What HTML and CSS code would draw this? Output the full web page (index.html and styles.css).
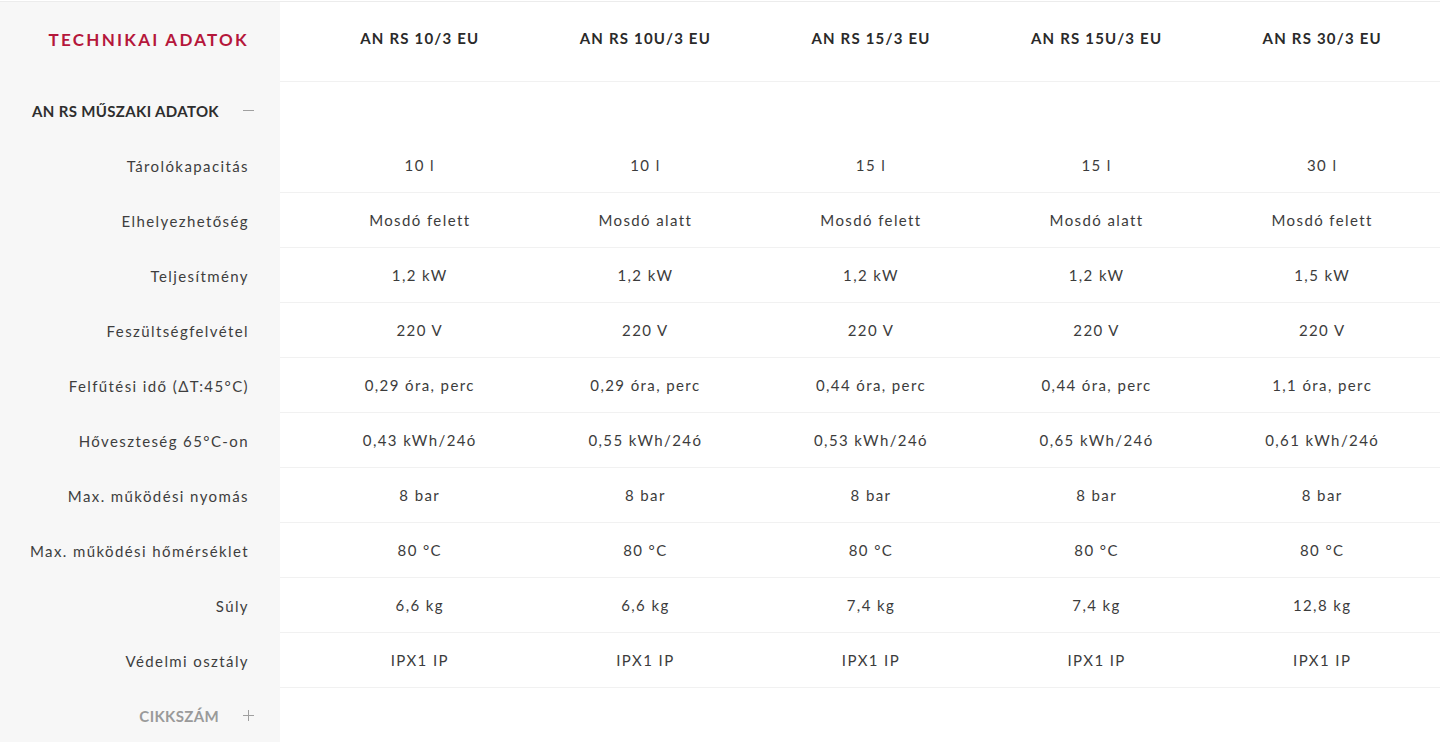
FILE: index.html
```html
<!DOCTYPE html>
<html lang="hu">
<head>
<meta charset="utf-8">
<title>Technikai adatok</title>
<link rel="stylesheet" href="styles.css">
</head>
<body>
<div class="specs">
  <div class="row head-row">
    <div class="label"><h2 class="title">TECHNIKAI ADATOK</h2></div>
    <div class="values">
      <div class="cell model">AN RS 10/3 EU</div>
      <div class="cell model">AN RS 10U/3 EU</div>
      <div class="cell model">AN RS 15/3 EU</div>
      <div class="cell model">AN RS 15U/3 EU</div>
      <div class="cell model">AN RS 30/3 EU</div>
    </div>
  </div>

  <div class="row group-row">
    <div class="label group"><span>AN RS MŰSZAKI ADATOK</span><span class="toggle minus"></span></div>
    <div class="values plain"></div>
  </div>

  <div class="row">
    <div class="label">Tárolókapacitás</div>
    <div class="values"><div class="cell">10 l</div><div class="cell">10 l</div><div class="cell">15 l</div><div class="cell">15 l</div><div class="cell">30 l</div></div>
  </div>
  <div class="row">
    <div class="label">Elhelyezhetőség</div>
    <div class="values"><div class="cell">Mosdó felett</div><div class="cell">Mosdó alatt</div><div class="cell">Mosdó felett</div><div class="cell">Mosdó alatt</div><div class="cell">Mosdó felett</div></div>
  </div>
  <div class="row">
    <div class="label">Teljesítmény</div>
    <div class="values"><div class="cell">1,2 kW</div><div class="cell">1,2 kW</div><div class="cell">1,2 kW</div><div class="cell">1,2 kW</div><div class="cell">1,5 kW</div></div>
  </div>
  <div class="row">
    <div class="label">Feszültségfelvétel</div>
    <div class="values"><div class="cell">220 V</div><div class="cell">220 V</div><div class="cell">220 V</div><div class="cell">220 V</div><div class="cell">220 V</div></div>
  </div>
  <div class="row">
    <div class="label">Felfűtési idő (ΔT:45°C)</div>
    <div class="values"><div class="cell">0,29 óra, perc</div><div class="cell">0,29 óra, perc</div><div class="cell">0,44 óra, perc</div><div class="cell">0,44 óra, perc</div><div class="cell">1,1 óra, perc</div></div>
  </div>
  <div class="row">
    <div class="label">Hőveszteség 65°C-on</div>
    <div class="values"><div class="cell">0,43 kWh/24ó</div><div class="cell">0,55 kWh/24ó</div><div class="cell">0,53 kWh/24ó</div><div class="cell">0,65 kWh/24ó</div><div class="cell">0,61 kWh/24ó</div></div>
  </div>
  <div class="row">
    <div class="label">Max. működési nyomás</div>
    <div class="values"><div class="cell">8 bar</div><div class="cell">8 bar</div><div class="cell">8 bar</div><div class="cell">8 bar</div><div class="cell">8 bar</div></div>
  </div>
  <div class="row">
    <div class="label">Max. működési hőmérséklet</div>
    <div class="values"><div class="cell">80 °C</div><div class="cell">80 °C</div><div class="cell">80 °C</div><div class="cell">80 °C</div><div class="cell">80 °C</div></div>
  </div>
  <div class="row">
    <div class="label">Súly</div>
    <div class="values"><div class="cell">6,6 kg</div><div class="cell">6,6 kg</div><div class="cell">7,4 kg</div><div class="cell">7,4 kg</div><div class="cell">12,8 kg</div></div>
  </div>
  <div class="row">
    <div class="label">Védelmi osztály</div>
    <div class="values"><div class="cell">IPX1 IP</div><div class="cell">IPX1 IP</div><div class="cell">IPX1 IP</div><div class="cell">IPX1 IP</div><div class="cell">IPX1 IP</div></div>
  </div>

  <div class="row group-row">
    <div class="label group closed"><span>CIKKSZÁM</span><span class="toggle plus"></span></div>
    <div class="values plain"></div>
  </div>
</div>
</body>
</html>
```

FILE: styles.css
```css
html, body {
  margin: 0;
  padding: 0;
  background: #ffffff;
}

body {
  font-family: "Lato", "Open Sans", sans-serif;
  color: #3a3a3a;
  height: 742px;
  overflow: hidden;
}

.specs {
  margin-top: 1px;
  border-top: 1px solid #ececec;
  background: linear-gradient(to right, #f7f7f7 0, #f7f7f7 280px, #ffffff 280px);
  min-height: 740px;
}

.row {
  display: flex;
  height: 55px;
}

.label {
  width: 280px;
  flex: none;
  box-sizing: border-box;
  padding-right: 31px;
  display: flex;
  align-items: center;
  justify-content: flex-end;
  font-size: 15px;
  letter-spacing: 1.4px;
  color: #3e3e3e;
  background: #f7f7f7;
  white-space: nowrap;
}

.values {
  flex: 1;
  display: grid;
  grid-template-columns: repeat(5, 1fr);
  padding: 0 5px 0 27px;
  border-bottom: 1px solid #f1f1f1;
  height: 54px;
}

.values.plain {
  border-bottom: none;
  height: 55px;
}

.cell {
  display: flex;
  align-items: center;
  justify-content: center;
  font-size: 15px;
  letter-spacing: 1.4px;
  color: #3c3c3c;
}

.head-row {
  height: 81px;
}

.head-row .values {
  height: 80px;
  padding-bottom: 8px;
  box-sizing: border-box;
}

.head-row .label {
  padding-right: 31px;
  padding-bottom: 6px;
}

.title {
  margin: 0;
  font-size: 17px;
  font-weight: 700;
  letter-spacing: 2.25px;
  color: #b5173b;
}

.model {
  font-size: 15px;
  font-weight: 700;
  letter-spacing: 1.2px;
  color: #2a2a2a;
}

.group {
  padding-right: 26px;
  gap: 24px;
  font-size: 15px;
  font-weight: 700;
  letter-spacing: 0.35px;
  color: #2e2e2e;
}

.group.closed {
  color: #9a9a9a;
}

.toggle {
  position: relative;
  width: 11px;
  height: 11px;
  flex: none;
}

.toggle::before,
.toggle::after {
  content: "";
  position: absolute;
  background: #a0a0a0;
}

.toggle::before {
  left: 0;
  right: 0;
  top: 5px;
  height: 1px;
}

.plus::after {
  top: 0;
  bottom: 0;
  left: 5px;
  width: 1px;
}
```
